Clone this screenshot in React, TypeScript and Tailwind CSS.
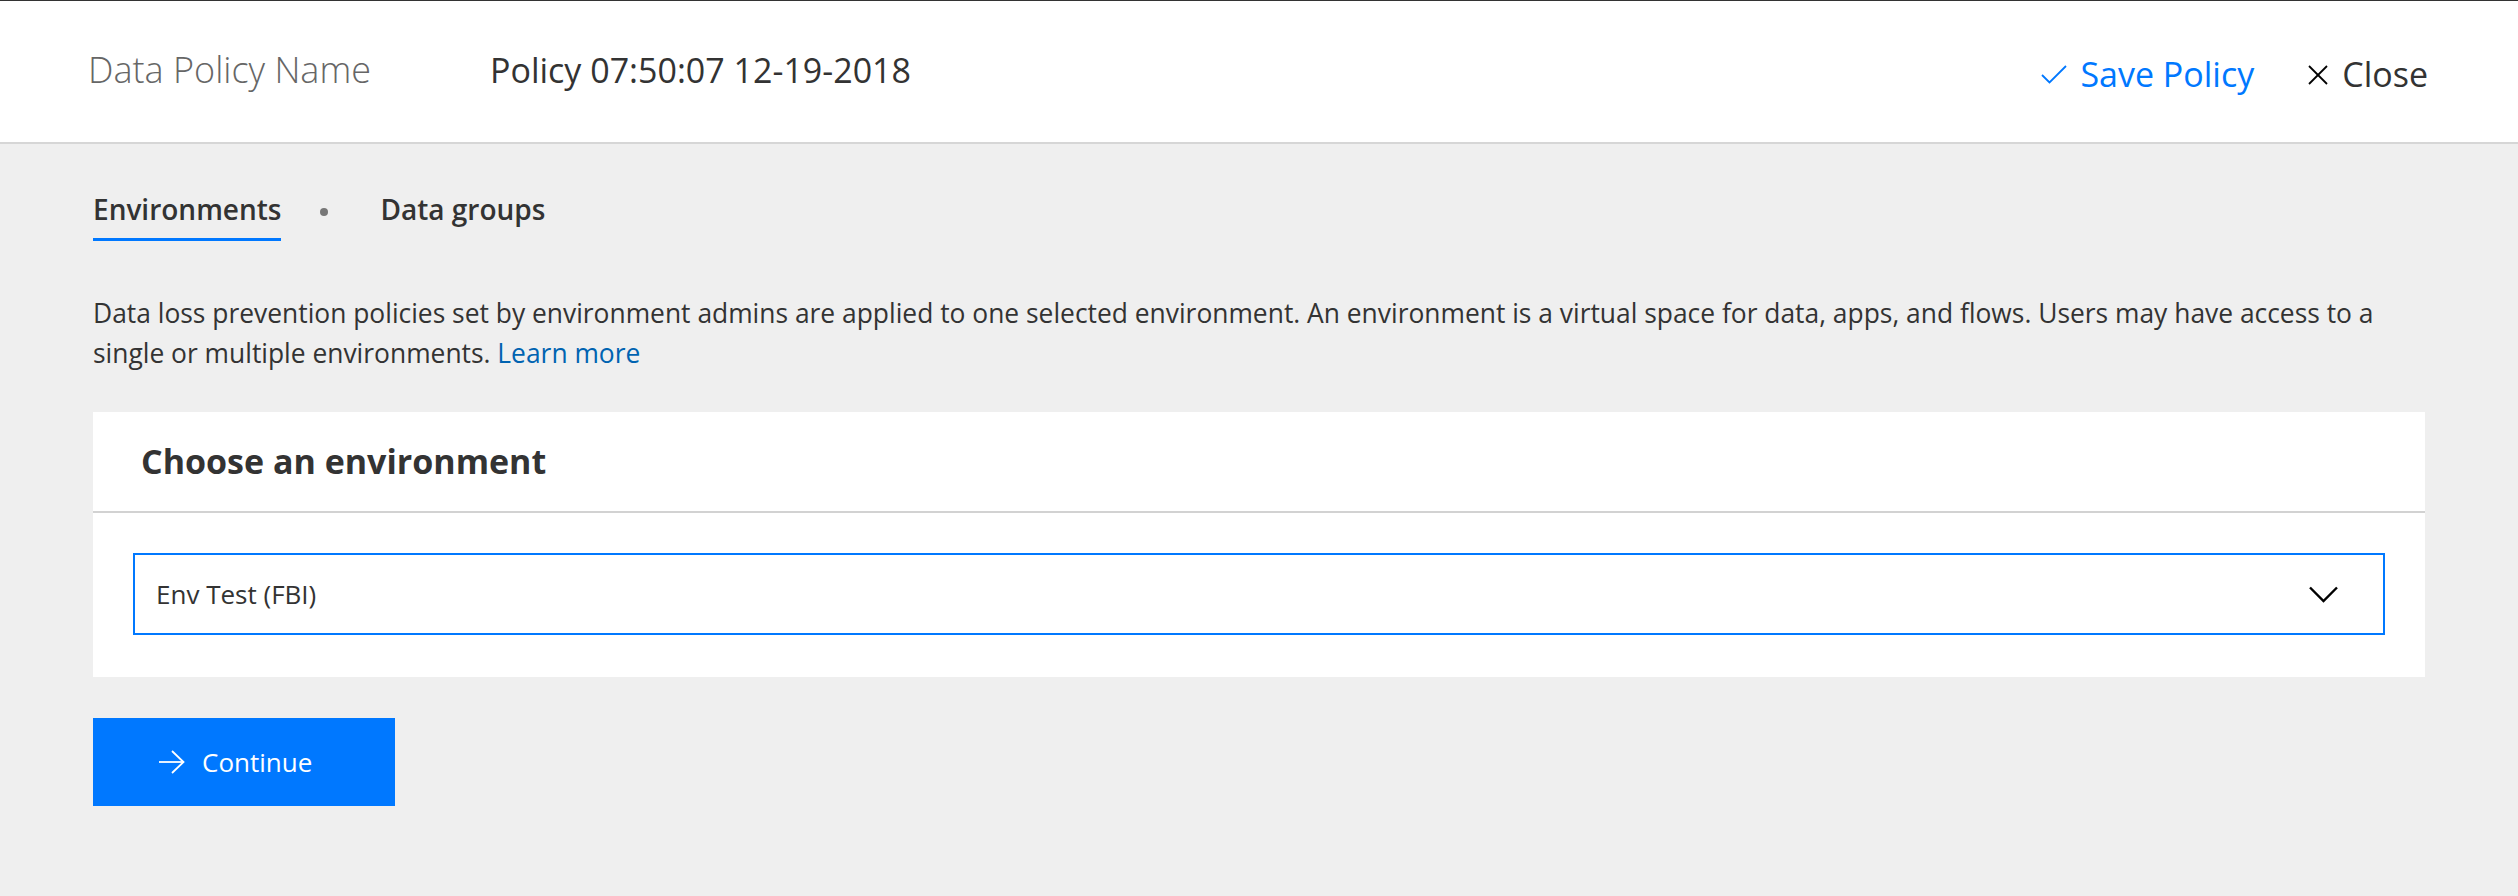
import React from "react";

const CheckIcon = () => (
  <svg width="26" height="19" viewBox="0 0 26 19" fill="none" stroke="currentColor" strokeWidth="1.8">
    <polyline points="1,10 8.5,17.5 25,1" />
  </svg>
);

const CloseIcon = () => (
  <svg width="20" height="20" viewBox="0 0 20 20" fill="none" stroke="currentColor" strokeWidth="1.8">
    <line x1="1" y1="1" x2="19" y2="19" />
    <line x1="19" y1="1" x2="1" y2="19" />
  </svg>
);

const ArrowIcon = () => (
  <svg width="26" height="24" viewBox="0 0 26 24" fill="none" stroke="currentColor" strokeWidth="1.8">
    <line x1="0" y1="12" x2="24.5" y2="12" />
    <polyline points="13,1 24.5,12 13,23" />
  </svg>
);

const ChevronIcon = () => (
  <svg width="29" height="17" viewBox="0 0 29 17" fill="none" stroke="currentColor" strokeWidth="2.4">
    <polyline points="1,1.5 14.5,15 28,1.5" />
  </svg>
);

const Header = () => (
  <header className="flex h-[144px] items-center border-t border-b-2 border-t-[#333] border-b-[#d6d6d6] bg-white pl-[88px] pr-[90px]">
    <span className="w-[402px] pb-[4px] text-[36px] font-light text-[#666]">Data Policy Name</span>
    <span className="pb-[2px] text-[34px] text-[#333]">Policy 07:50:07 12-19-2018</span>
    <div className="ml-auto flex items-center gap-[54px] pt-[6px] text-[34px]">
      <button className="flex items-center gap-[13px] text-[#0078ff]">
        <CheckIcon />
        Save Policy
      </button>
      <button className="flex items-center gap-[14px] text-[#333]">
        <span className="text-black">
          <CloseIcon />
        </span>
        Close
      </button>
    </div>
  </header>
);

const Tabs = () => (
  <div className="flex items-start">
    <div className="border-b-[3px] border-[#0078ff] pb-[10px] text-[28px] font-semibold leading-[38px] text-[#333]">
      Environments
    </div>
    <span className="mt-[18px] ml-[39px] mr-[52px] h-[8px] w-[8px] rounded-full bg-[#777]" />
    <div className="text-[28px] font-semibold leading-[38px] text-[#333]">Data groups</div>
  </div>
);

export default function App() {
  return (
    <div className="min-h-[896px] bg-[#efefef] font-['Open_Sans',sans-serif] text-[#333]">
      <Header />
      <main className="px-[93px] pt-[46px]">
        <Tabs />
        <p className="mt-[52px] text-[26.4px] leading-[40px] text-[#333]">
          Data loss prevention policies set by environment admins are applied to one selected environment. An
          environment is a virtual space for data, apps, and flows. Users may have access to a single or multiple
          environments. <a className="text-[#0063b1]">Learn more</a>
        </p>
        <section className="mt-[39px] bg-white">
          <div className="flex h-[101px] items-center border-b-2 border-[#d2d2d2] pl-[48px]">
            <h2 className="text-[34px] font-bold text-[#333]">Choose an environment</h2>
          </div>
          <div className="px-[40px] pt-[40px] pb-[42px]">
            <div className="flex h-[82px] items-center justify-between border-2 border-[#0078ff] pl-[21px] pr-[45px] text-[26px] text-[#333]">
              <span>Env Test (FBI)</span>
              <span className="text-black">
                <ChevronIcon />
              </span>
            </div>
          </div>
        </section>
        <button className="mt-[41px] flex h-[88px] w-[302px] items-center gap-[17px] bg-[#0078ff] pl-[66px] text-[26px] text-white">
          <ArrowIcon />
          Continue
        </button>
      </main>
    </div>
  );
}
